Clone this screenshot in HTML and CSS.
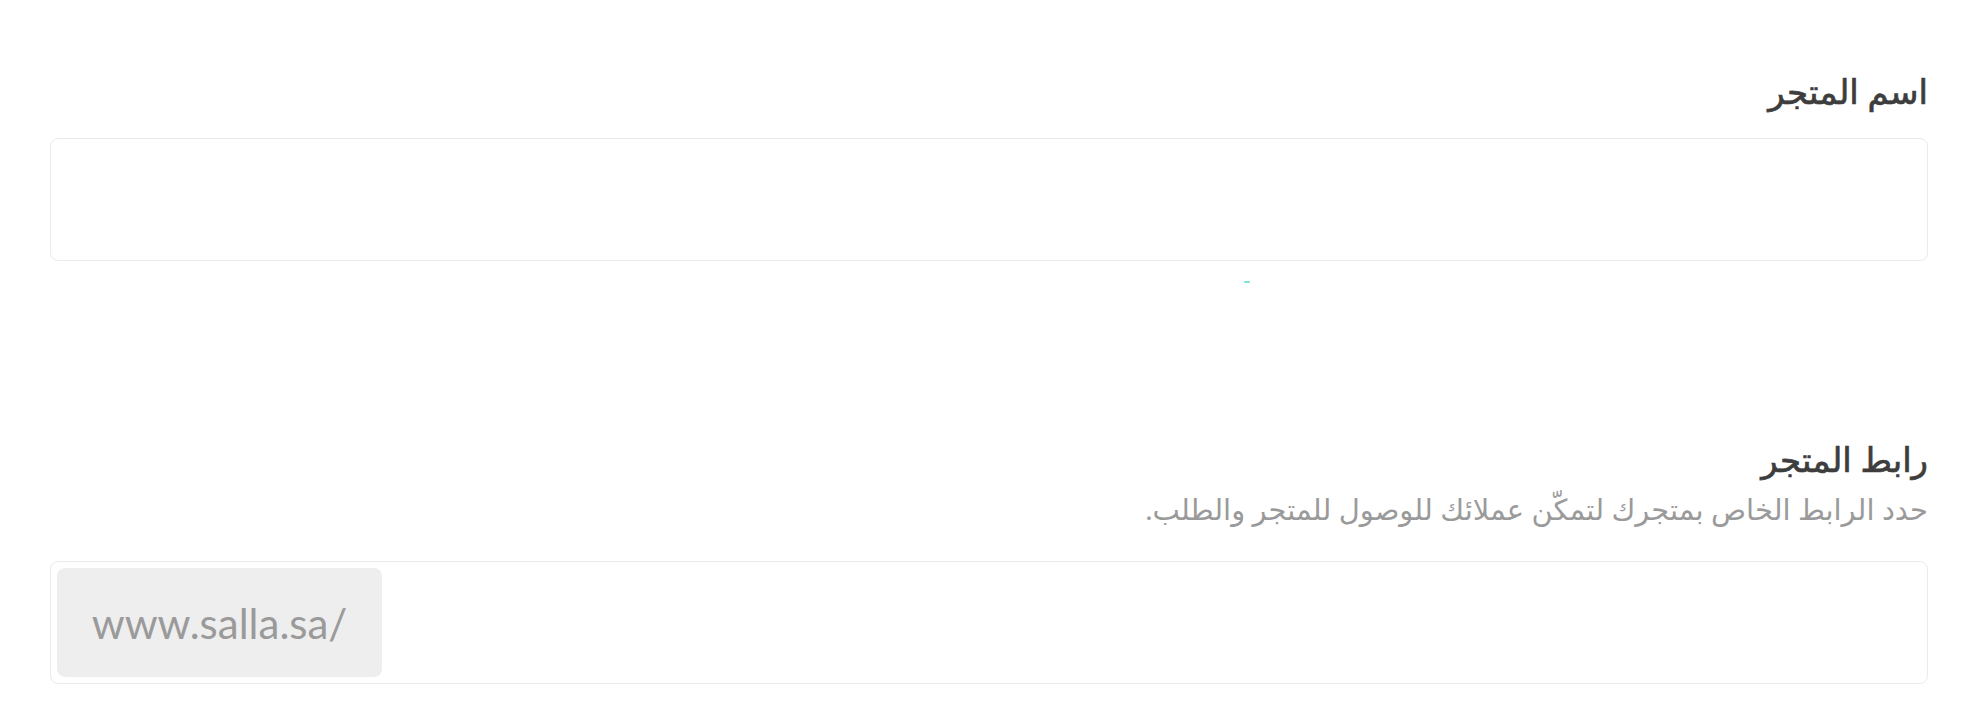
FILE: index.html
```html
<!DOCTYPE html>
<html lang="ar" dir="rtl">
<head>
<meta charset="utf-8">
<title>إعدادات المتجر</title>
<link rel="stylesheet" href="styles.css">
</head>
<body>
<main class="page">
  <section class="field field-name">
    <label class="label" for="store-name">اسم المتجر</label>
    <div class="box">
      <input class="control" id="store-name" type="text">
    </div>
    <div class="loader-row"><span class="loader"></span></div>
  </section>
  <section class="field field-url">
    <label class="label" for="store-url">رابط المتجر</label>
    <p class="hint">حدد الرابط الخاص بمتجرك لتمكّن عملائك للوصول للمتجر والطلب.</p>
    <div class="box">
      <input class="control" id="store-url" type="text">
      <div class="prefix" dir="ltr">www.salla.sa/</div>
    </div>
  </section>
</main>
</body>
</html>
```

FILE: styles.css
```css
html, body {
  margin: 0;
  padding: 0;
  background: #ffffff;
}
body {
  font-family: "Lato", "DejaVu Sans", sans-serif;
  color: #444444;
}
.page {
  padding: 69px 46px 0 50px;
  display: flex;
  flex-direction: column;
}
.field {
  display: flex;
  flex-direction: column;
}
.label {
  font-size: 34px;
  line-height: 44px;
  font-weight: 400;
  -webkit-text-stroke: 0.7px #3d3d3d;
  color: #3d3d3d;
  margin-bottom: 25px;
}
.field-url {
  margin-top: 154px;
}
.field-url .label {
  margin-bottom: 10px;
}
.hint {
  margin: 0 0 34px 0;
  font-size: 29px;
  line-height: 36px;
  color: #9a9a9a;
}
.box {
  border: 1px solid #ebebeb;
  border-radius: 8px;
  display: flex;
  align-items: stretch;
  padding: 6px;
  height: 109px;
}
.control {
  flex: 1;
  border: 0;
  outline: none;
  background: transparent;
  font: inherit;
  min-width: 0;
}
.prefix {
  width: 325px;
  background: #eeeeee;
  border-radius: 8px;
  color: #9a9a9a;
  font-size: 42px;
  display: flex;
  align-items: center;
  justify-content: center;
}
.loader-row {
  display: flex;
  justify-content: center;
  padding-top: 20px;
}
.loader {
  width: 6px;
  height: 2px;
  background: #7de3d4;
  border-radius: 1px;
  margin-left: 516px;
}
```
